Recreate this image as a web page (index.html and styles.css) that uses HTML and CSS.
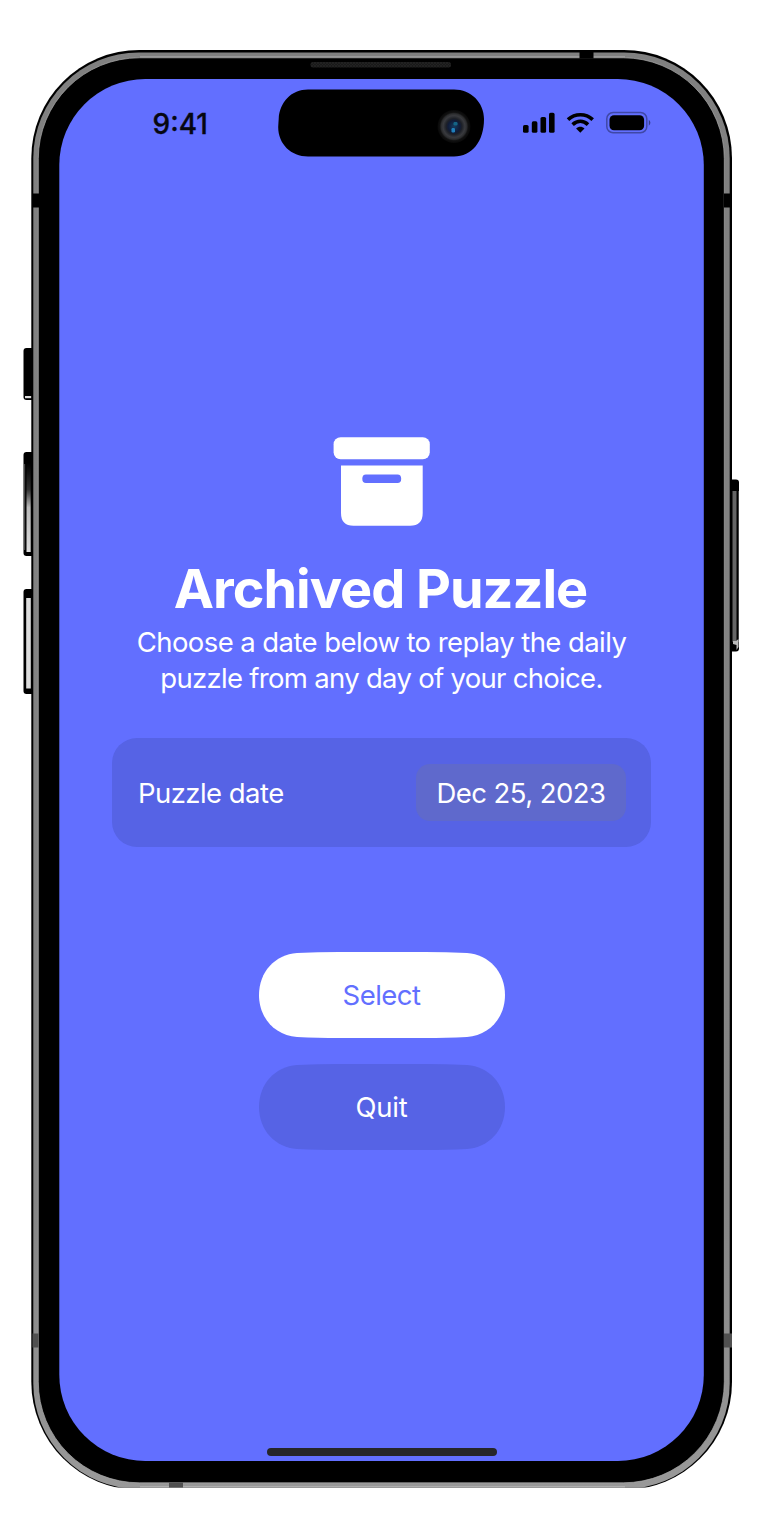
FILE: index.html
```html
<!DOCTYPE html>
<html lang="en">
<head>
<meta charset="utf-8">
<title>Archived Puzzle</title>
<link rel="stylesheet" href="styles.css">
</head>
<body>
<div class="device">
  <svg class="frame" width="766" height="1529" viewBox="0 0 766 1529" aria-hidden="true">
    <defs>
      <linearGradient id="rail" x1="0" y1="52" x2="0" y2="1488" gradientUnits="userSpaceOnUse">
        <stop offset="0" stop-color="#808080"/><stop offset="0.8" stop-color="#858585"/><stop offset="1" stop-color="#999"/>
      </linearGradient>
      <linearGradient id="shine" x1="0" y1="0" x2="0" y2="1">
        <stop offset="0" stop-color="#000"/><stop offset="0.3" stop-color="#333"/><stop offset="0.5" stop-color="#bbb"/><stop offset="1" stop-color="#ddd"/>
      </linearGradient>
      <pattern id="mesh" width="3" height="3" patternUnits="userSpaceOnUse">
        <rect width="3" height="3" fill="#191919"/><path d="M0 0l3 3M3 0L0 3" stroke="#262626" stroke-width=".6"/>
      </pattern>
      <clipPath id="base"><rect width="766" height="1487.500"/></clipPath>
    </defs>
    <!-- side buttons -->
    <rect x="23.5" y="348" width="12" height="52" rx="3"/>
    <rect x="25" y="396" width="6.500" height="2.200" fill="#ddd"/>
    <rect x="23.5" y="452" width="12" height="104" rx="3"/>
    <rect x="24.300" y="464" width=".8" height="86" fill="#666"/>
    <rect x="26.500" y="463" width="4.200" height="89" fill="url(#shine)"/>
    <rect x="23.5" y="589" width="12" height="105" rx="3"/>
    <rect x="26.200" y="598" width="4.600" height="90.500" fill="#ddd"/>
    <rect x="728" y="479.500" width="11" height="172" rx="3"/>
    <rect x="732.500" y="491" width="4" height="151" fill="#666"/>
    <rect x="738" y="491" width=".8" height="151" fill="#555"/>
    <path d="M733 641h3l2.500-2v8l-2 3v-5l-3.500-1z" fill="#bbb"/>
    <!-- body and metal rail -->
    <g clip-path="url(#base)">
      <rect x="31.300" y="50" width="700.700" height="1440" rx="108"/>
      <rect x="33.300" y="52.500" width="696.400" height="1436.500" rx="105.500" fill="url(#rail)"/>
      <rect x="38.300" y="57.800" width="686" height="1425" rx="101" stroke="#aaa" stroke-width=".7"/>
      <path d="M140 56.700H625" stroke="#999" stroke-width="1.500"/>
      <path d="M140 1487H625" stroke="#c4c4c4"/>
    </g>
    <!-- antenna bands -->
    <path d="M579.500 52h14v6.500h-14zM33 193.500h6v14h-6zM724 193.500h8v14h-8z"/>
    <path d="M32.500 1333.500h6v14h-6zM724 1333.500h8v14h-8zM169 1482.500h14v5h-14z" fill="#505050"/>
    <rect x="310.500" y="62" width="140.500" height="5.500" rx="2.500" fill="url(#mesh)"/>
    <rect x="59.300" y="79" width="644.500" height="1382" rx="86" fill="#626fff"/>
  </svg>
  <main class="screen">
    <header class="status">
      <time class="clock">9:41</time>
      <svg class="island" width="208" height="68" viewBox="0 0 208 68" aria-hidden="true">
        <defs>
          <radialGradient id="lens"><stop offset="0" stop-color="#143a60"/><stop offset=".36" stop-color="#101b38"/><stop offset=".48" stop-color="#1d2027"/><stop offset=".66" stop-color="#393a3e"/><stop offset=".78" stop-color="#2b2c2e"/><stop offset=".86" stop-color="#111"/><stop offset="1" stop-color="#080808"/></radialGradient>
        </defs>
        <path d="M1.700 30C2.500 13 14.500 .5 31 .5H177C194 .5 207 13.500 207 30C207 52.500 195 67.500 177 67.500H31C14 67.500 1.200 55 1.200 38Q1.400 34 1.700 30Z"/>
        <circle cx="177" cy="37.500" r="16.500" fill="url(#lens)"/>
        <rect x="176.500" y="33" width="4" height="3.500" rx="1.200" fill="#146486"/>
        <rect x="174.500" y="39" width="3.500" height="4.500" rx="1.200" fill="#2080bb"/>
      </svg>
      <svg class="signals" width="129" height="24" viewBox="0 0 129 24" aria-hidden="true">
        <rect x="1" y="14" width="5.600" height="7.800" rx="1.600"/><rect x="9.800" y="10.300" width="5.600" height="11.500" rx="1.600"/><rect x="18.500" y="6" width="5.600" height="15.800" rx="1.600"/><rect x="27" y="1.800" width="5.600" height="20" rx="1.600"/>
        <path d="M46 8.700C53.200 2.100 63.600 2.100 70.700 8.700M50.600 13.600C55.400 9.300 61.400 9.300 66 13.600" fill="none" stroke="#000" stroke-width="3.700"/>
        <path d="M58.300 21.800l-4.200-4.300c2.400-2.300 6-2.300 8.400 0z"/>
        <rect x="84.800" y="1.500" width="40" height="20.200" rx="6.300" fill="none" stroke="#000" stroke-opacity=".35" stroke-width="1.500"/>
        <rect x="87.500" y="4.200" width="34.600" height="15" rx="4.500"/>
        <path d="M126.800 8.700q3.200 3 0 6z" fill-opacity=".45"/>
      </svg>
    </header>
    <section class="intro">
      <svg class="archive" width="98" height="90" viewBox="0 0 98 90" fill="#fff" aria-hidden="true">
        <rect x=".6" y=".3" width="96.200" height="21.900" rx="7"/>
        <path fill-rule="evenodd" d="M8 28.500H89.700V76Q89.700 88.800 77 88.800H20.500Q8 88.800 8 76ZM33 37.400Q29.300 37.400 29.300 41.700T33 46H64.500Q68.200 46 68.200 41.700T64.500 37.400Z"/>
      </svg>
      <h1 class="title">Archived Puzzle</h1>
      <p class="lead"><span class="line-one">Choose a date below to replay the daily</span><br><span class="line-two">puzzle from any day of your choice.</span></p>
    </section>
    <div class="date-row">
      <span class="date-label">Puzzle date</span>
      <button class="date-value"><span>Dec 25, 2023</span></button>
    </div>
    <div class="actions">
      <button class="pill"><svg class="pill-shape" viewBox="0 0 246 86" aria-hidden="true"><path d="M0 43C0 20 16 2.500 38 1C52 .2 66 0 80 0H166C180 0 194 .2 208 1C230 2.500 246 20 246 43S230 83.500 208 85C194 85.800 180 86 166 86H80C66 86 52 85.800 38 85C16 83.500 0 66 0 43Z" fill="#fff"/></svg><span class="pill-text select">Select</span></button>
      <button class="pill"><svg class="pill-shape" viewBox="0 0 246 86" aria-hidden="true"><path d="M0 43C0 20 16 2.500 38 1C52 .2 66 0 80 0H166C180 0 194 .2 208 1C230 2.500 246 20 246 43S230 83.500 208 85C194 85.800 180 86 166 86H80C66 86 52 85.800 38 85C16 83.500 0 66 0 43Z" fill="#5663e5"/></svg><span class="pill-text quit">Quit</span></button>
    </div>
    <div class="home-bar"></div>
  </main>
</div>
</body>
</html>
```
FILE: styles.css
```css
* { box-sizing: border-box; }
body { margin: 0; background: #fff; font-family: Inter, "Liberation Sans", sans-serif; }
button { border: 0; padding: 0; background: none; font: inherit; color: inherit; letter-spacing: inherit; }
.device { position: relative; width: 766px; height: 1529px; padding: 79px 62px 68px 59px; }
.frame { position: absolute; inset: 0; }
.screen { position: relative; height: 1382px; color: #fff; font-size: 27.5px; letter-spacing: -.55px; display: flex; flex-direction: column; align-items: center; }
.status { width: 100%; height: 90px; flex: none; display: grid; grid-template-columns: 218px 208px 1fr; padding-top: 10px; }
.clock { color: #000; font-size: 28px; font-weight: 500; line-height: 34px; padding: 18px 0 0 93.5px; letter-spacing: 0; -webkit-text-stroke: .3px #000; opacity: .93; }
.signals { margin: 22px 0 0 37px; }
.intro { padding-top: 268px; display: flex; flex-direction: column; align-items: center; }
.archive { display: block; }
.title { margin: 29px 2px 0 0; font-size: 54px; line-height: 66px; font-weight: 700; white-space: nowrap; letter-spacing: -1.02px; }
.lead { margin: 2px 0 0; line-height: 36px; text-align: center; white-space: nowrap; }
.line-one { letter-spacing: -.58px; }
.line-two { letter-spacing: -.7px; }
.date-row { margin-top: 42px; width: 539px; height: 109px; flex: none; border-radius: 25px; background: #5663e5; padding: 0 25px 0 26px; display: flex; align-items: center; justify-content: space-between; }
.date-value { width: 210px; height: 57px; border-radius: 14px; background: #5f69cc; }
.actions { margin-top: 105px; display: grid; gap: 26px; }
.pill { width: 246px; height: 86px; display: grid; place-items: center; }
.pill-shape, .pill-text { grid-area: 1 / 1; }
.pill-shape { width: 246px; height: 86px; display: block; }
.pill-text { position: relative; }
.select { color: #626fff; }
.quit { letter-spacing: -.2px; }
.home-bar { margin: auto 0 5px; width: 230px; height: 8px; border-radius: 4px; background: #262629; }
```
